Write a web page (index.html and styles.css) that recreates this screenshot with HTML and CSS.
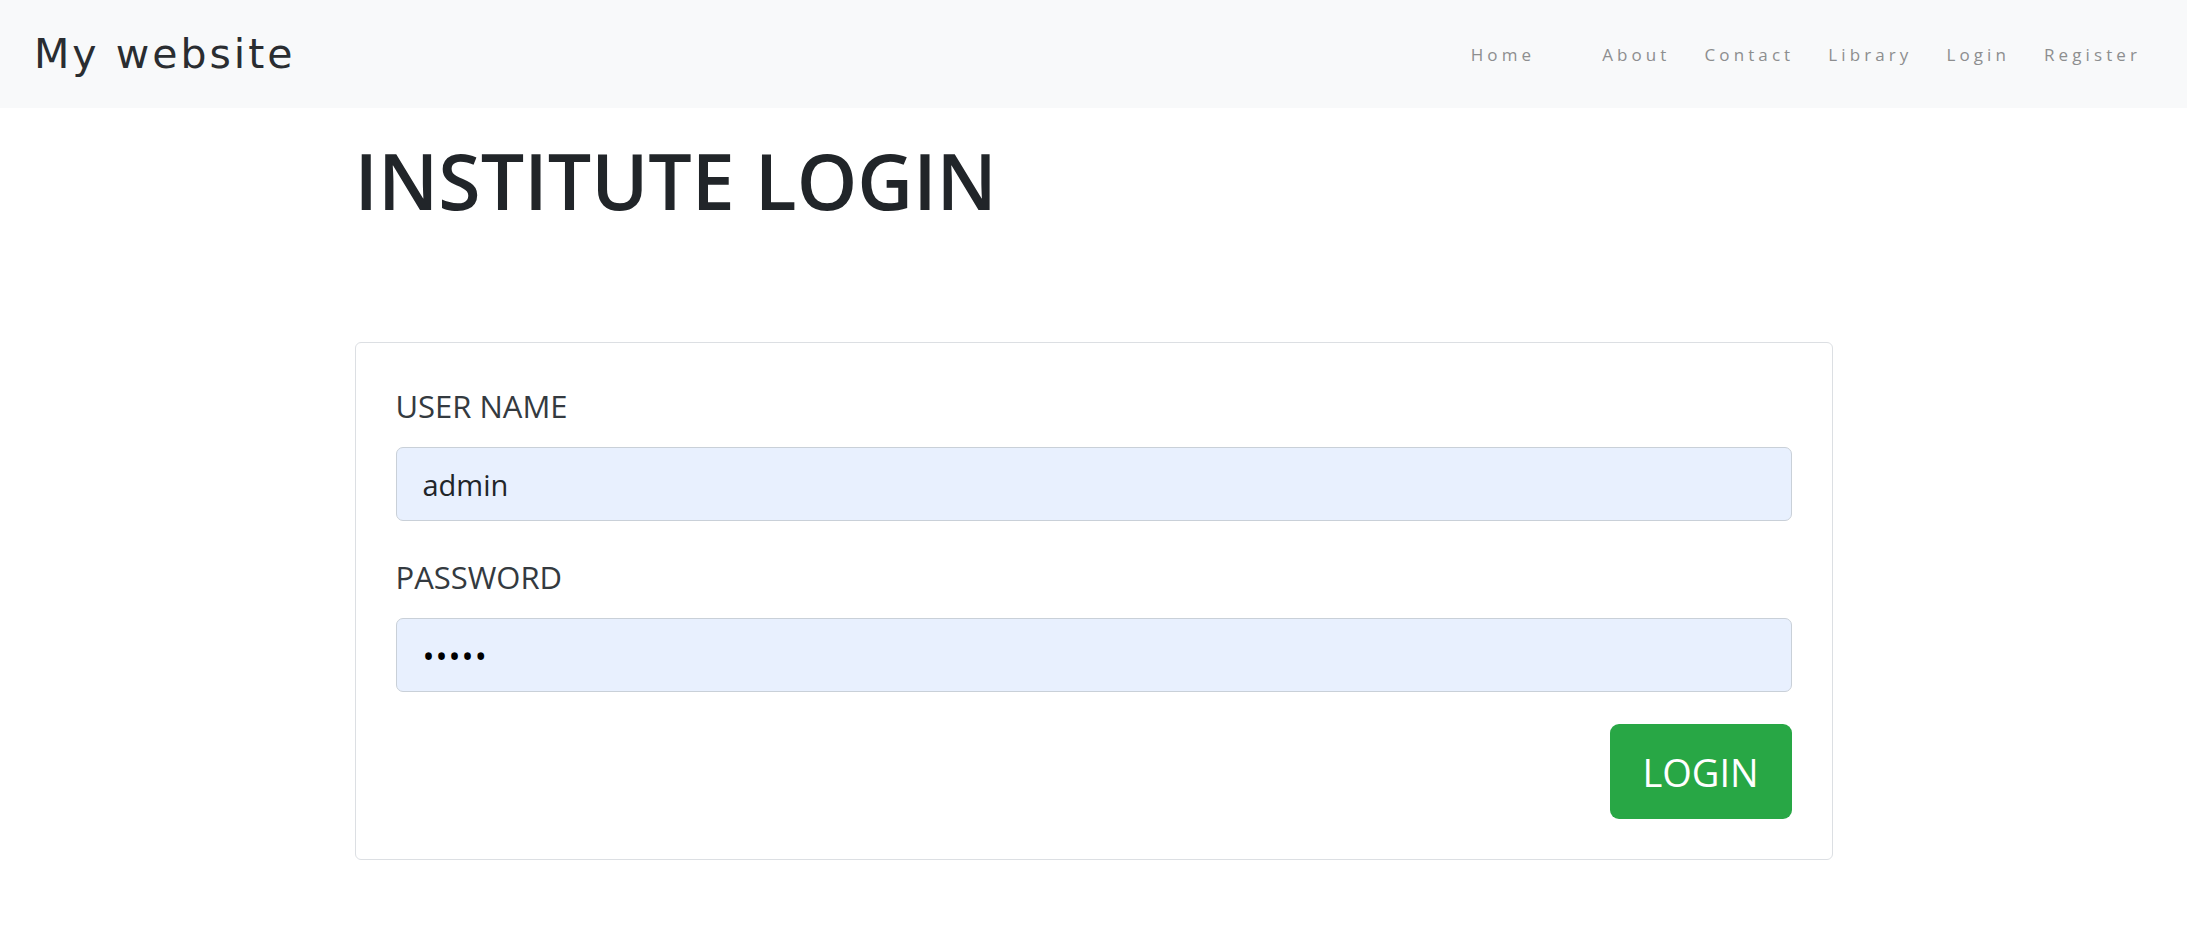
FILE: index.html
```html
<!DOCTYPE html>
<html lang="en">
<head>
<meta charset="utf-8">
<title>Institute Login</title>
<link rel="stylesheet" href="styles.css">
</head>
<body>
<nav class="navbar">
  <a class="brand" href="#">My website</a>
  <ul class="nav-links">
    <li><a class="nav-link home" href="#">Home</a></li>
    <li><a class="nav-link" href="#">About</a></li>
    <li><a class="nav-link" href="#">Contact</a></li>
    <li><a class="nav-link" href="#">Library</a></li>
    <li><a class="nav-link" href="#">Login</a></li>
    <li><a class="nav-link" href="#">Register</a></li>
  </ul>
</nav>
<main class="container">
  <h1 class="title">INSTITUTE LOGIN</h1>
  <form class="card">
    <div class="form-group">
      <label class="label" for="user">USER NAME</label>
      <input class="input" id="user" type="text" value="admin">
    </div>
    <div class="form-group">
      <label class="label" for="pass">PASSWORD</label>
      <input class="input input-pass" id="pass" type="password" value="admin">
    </div>
    <div class="actions">
      <button class="btn" type="button">LOGIN</button>
    </div>
  </form>
</main>
</body>
</html>
```
FILE: styles.css
```css
* { box-sizing: border-box; }
body {
  margin: 0;
  background: #fff;
  font-family: "Open Sans", "Liberation Sans", sans-serif;
  color: #212529;
}
.navbar {
  height: 108px;
  background: #f8f9fa;
  display: flex;
  align-items: center;
  justify-content: space-between;
  padding: 0 50px 0 34px;
}
.brand {
  font-family: "DejaVu Sans", "Lato", sans-serif;
  font-size: 41px;
  letter-spacing: 3px;
  color: #2a2d31;
  text-decoration: none;
}
.nav-links {
  list-style: none;
  display: flex;
  gap: 38px;
  margin: 0;
  padding: 0;
}
.nav-link {
  font-family: "Open Sans", sans-serif;
  font-size: 17px;
  letter-spacing: 4.1px;
  margin-right: -4px;
  color: #8d8e8f;
  text-decoration: none;
}
.nav-link.home { margin-right: 29px; }
.container {
  width: 1478px;
  margin: 0 auto;
}
.title {
  margin: 25px 0 114px;
  font-size: 77px;
  font-weight: 600;
  line-height: 95px;
  color: #212529;
}
.card {
  border: 1px solid #dcdfe3;
  border-radius: 6px;
  padding: 40px;
  display: flex;
  flex-direction: column;
}
.form-group { display: flex; flex-direction: column; }
.form-group + .form-group { margin-top: 33px; }
.label {
  font-size: 31px;
  line-height: 46px;
  color: #343a40;
  margin-bottom: 18px;
}
.input {
  height: 74px;
  border: 1px solid #c9d0d8;
  border-radius: 7px;
  background: #e8f0fe;
  padding: 0 26px;
  font-family: "Open Sans", sans-serif;
  font-size: 29px;
  color: #212529;
  outline: none;
}
.input-pass {
  font-size: 32px;
  letter-spacing: 1px;
  color: #000;
}
.actions {
  display: flex;
  justify-content: flex-end;
  margin-top: 32px;
}
.btn {
  height: 95px;
  width: 182px;
  border: none;
  border-radius: 9px;
  background: #28a745;
  color: #fff;
  font-family: "Open Sans", sans-serif;
  font-size: 38px;
  cursor: pointer;
}
```
